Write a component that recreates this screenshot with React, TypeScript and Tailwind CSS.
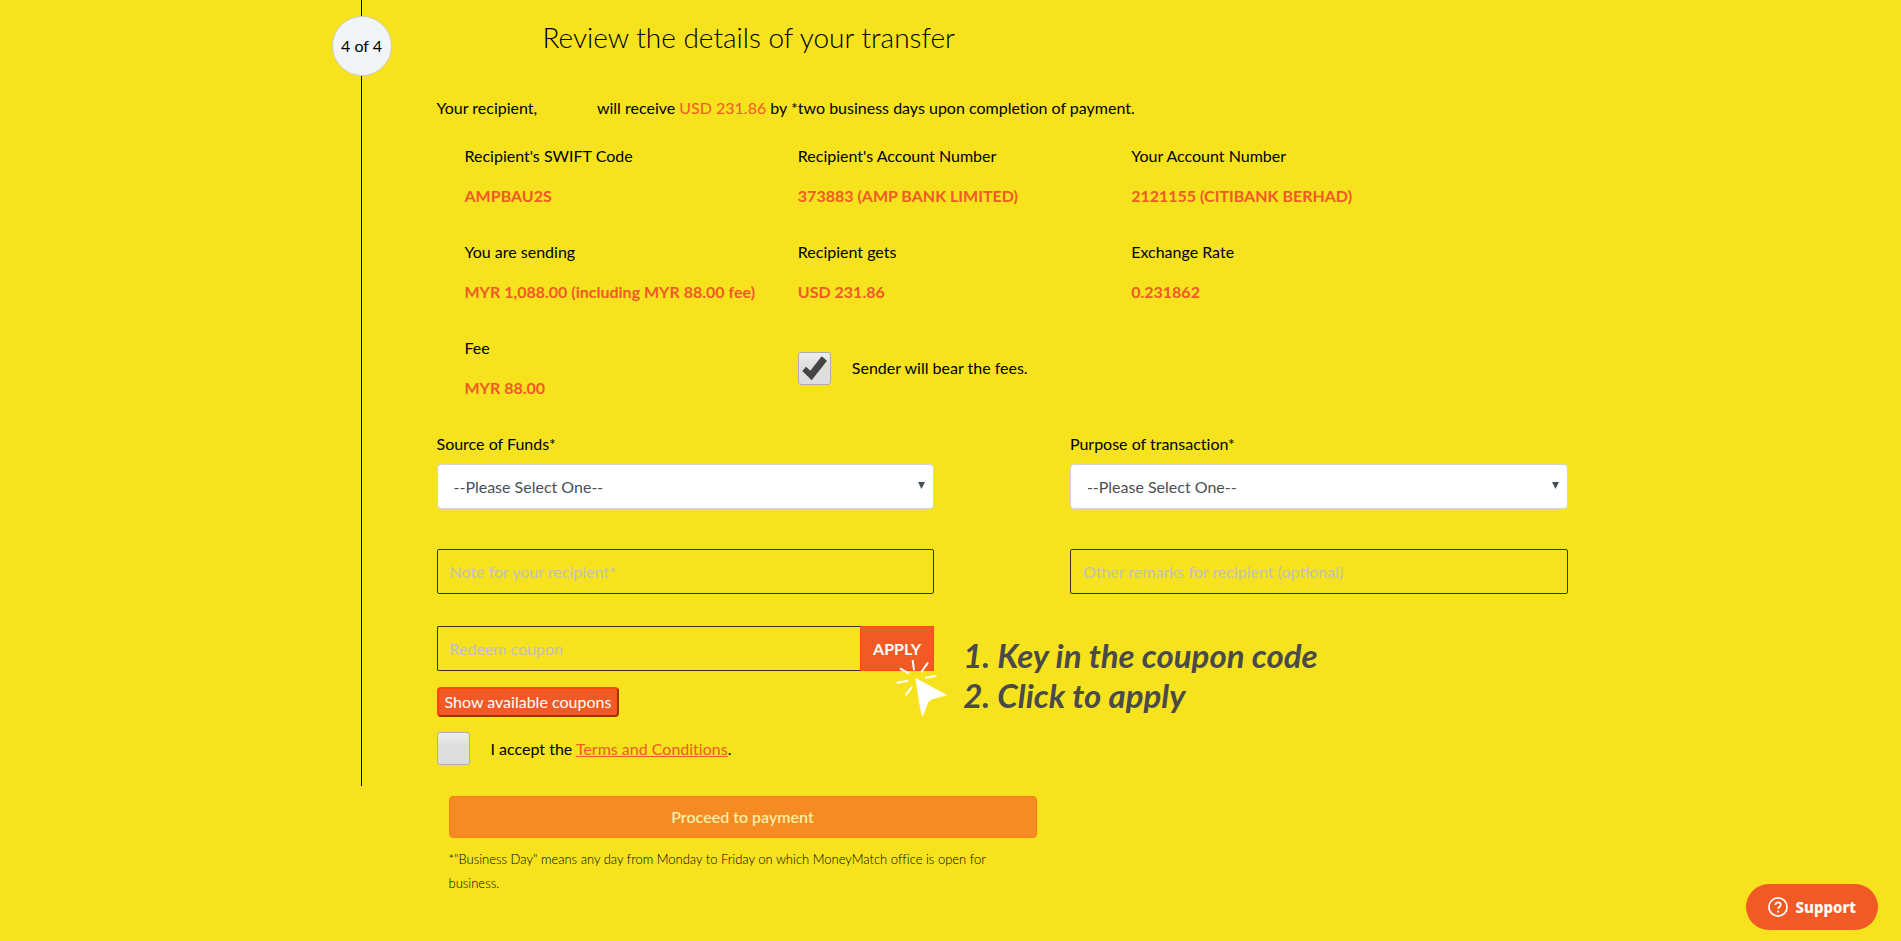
import { useState } from 'react';

type DetailProps = {
  label: string;
  value: string;
};

// One label / value pair in the summary grid
function Detail({ label, value }: DetailProps) {
  return (
    <div className="flex flex-col gap-4">
      <dt>{label}</dt>
      <dd className="font-bold text-[#f15a24]">{value}</dd>
    </div>
  );
}

type CheckBoxProps = {
  id: string;
  checked: boolean;
  onChange: (checked: boolean) => void;
};

function CheckBox({ id, checked, onChange }: CheckBoxProps) {
  return (
    <span className="grid size-[33px] shrink-0">
      <input
        id={id}
        type="checkbox"
        checked={checked}
        onChange={(e) => onChange(e.target.checked)}
        className="col-start-1 row-start-1 size-[33px] appearance-none rounded-[3px] border border-[#adadad] bg-linear-to-b from-[#eeeeee] via-[#dedede] via-40% to-[#dedede]"
      />
      {checked && (
        <svg viewBox="0 0 99 99" className="pointer-events-none col-start-1 row-start-1 size-[33px]">
          <path d="M13 57 24 44 37 56 71 13 87 26 41 85Z" fill="#444" />
        </svg>
      )}
    </span>
  );
}

type SelectFieldProps = {
  id: string;
  label: string;
};

function SelectField({ id, label }: SelectFieldProps) {
  return (
    <div className="flex w-[44%] flex-col gap-2">
      <label htmlFor={id}>{label}</label>
      <div className="grid items-center">
        <select
          id={id}
          className="col-start-1 row-start-1 h-[45px] w-full appearance-none rounded border border-[#ced4da] bg-white px-4 text-[#495057]"
        >
          <option>--Please Select One--</option>
        </select>
        <svg viewBox="0 0 7 7" className="pointer-events-none col-start-1 row-start-1 mr-[9px] mb-0.5 size-[7px] justify-self-end">
          <path d="M0 0H7L3.5 7Z" fill="#495057" />
        </svg>
      </div>
    </div>
  );
}

function ClickCursor() {
  return (
    <svg viewBox="50 148 156 171" className="pointer-events-none absolute top-[33px] right-[-14px] h-[57px] w-[52px]">
      <g stroke="#fff" strokeWidth="6" fill="none">
        <path d="M100 151 104 182" />
        <path d="M146 159 126 187" />
        <path d="M62 176 89 192" />
        <path d="M52 219 86 213" />
        <path d="M137 205 171 198" />
        <path d="M98 231 79 257" />
      </g>
      <path d="M108 204 204 257 158 269Q148 274 143 287L132 318H127L118 270Z" fill="#fff" />
    </svg>
  );
}

export default function App() {
  const [senderBears, setSenderBears] = useState(true);
  const [accepted, setAccepted] = useState(false);

  return (
    <div className="min-h-screen bg-[#f6e31e] font-['Lato','Liberation_Sans',sans-serif] text-base text-black [font-variant-ligatures:none]">
      <main className="mx-auto w-full max-w-[1238px]">
        <div className="flex gap-[45px]">
          {/* Step rail */}
          <div className="flex w-[60px] shrink-0 flex-col items-center">
            <div className="h-4 w-px bg-black" />
            <div className="flex size-[60px] items-center justify-center rounded-full border border-[#ccc] bg-[#f1f5f8]">
              4 of 4
            </div>
            <div className="w-px flex-1 bg-black" />
          </div>

          <section className="min-w-0 flex-1 pt-[19px] pr-0.5 pb-[21px]">
            <h1 className="ml-[106px] text-[28px] leading-9 font-light">Review the details of your transfer</h1>

            <p className="mt-[41px]">
              Your recipient,
              <span className="inline-block w-[56px]" /> will receive <span className="text-[#f15a24]">USD 231.86</span> by
              *two business days upon completion of payment.
            </p>

            <dl className="mt-6 grid grid-cols-3 gap-y-8 pr-[103px] pl-7">
              <Detail label="Recipient's SWIFT Code" value="AMPBAU2S" />
              <Detail label="Recipient's Account Number" value="373883 (AMP BANK LIMITED)" />
              <Detail label="Your Account Number" value="2121155 (CITIBANK BERHAD)" />
              <Detail label="You are sending" value="MYR 1,088.00 (including MYR 88.00 fee)" />
              <Detail label="Recipient gets" value="USD 231.86" />
              <Detail label="Exchange Rate" value="0.231862" />
              <Detail label="Fee" value="MYR 88.00" />
              <div className="flex items-center gap-[21px]">
                <CheckBox id="bear-fees" checked={senderBears} onChange={setSenderBears} />
                <label htmlFor="bear-fees">Sender will bear the fees.</label>
              </div>
            </dl>

            <div className="mt-8 flex justify-between">
              <SelectField id="source" label="Source of Funds*" />
              <SelectField id="purpose" label="Purpose of transaction*" />
            </div>

            <div className="mt-10 flex justify-between">
              <input
                type="text"
                aria-label="Note for your recipient"
                placeholder="Note for your recipient*"
                className="h-[45px] w-[44%] rounded-xs border border-[#333] px-3 [font-variant-ligatures:normal] placeholder:text-[#c0c0c0]"
              />
              <input
                type="text"
                aria-label="Other remarks for recipient"
                placeholder="Other remarks for recipient (optional)"
                className="h-[45px] w-[44%] rounded-xs border border-[#333] px-3 [font-variant-ligatures:normal] placeholder:text-[#c0c0c0]"
              />
            </div>

            <div className="mt-8 flex gap-[29px]">
              <div className="flex w-[44%] flex-col items-start">
                <div className="relative flex w-full">
                  <input
                    type="text"
                    aria-label="Redeem coupon"
                    placeholder="Redeem coupon"
                    className="h-[45px] min-w-0 flex-1 rounded-l-xs border border-r-0 border-[#333] px-3 placeholder:text-[#c0c0c0]"
                  />
                  <button type="button" className="h-[45px] w-[74px] border border-[#ff4a10] bg-[#f15a24] font-bold text-white">
                    APPLY
                  </button>
                  <ClickCursor />
                </div>
                <button
                  type="button"
                  className="mt-4 h-[30px] rounded border-2 border-t-[#ff4500] border-r-[#a82e00] border-b-[#a82e00] border-l-[#ff4500] bg-[#f15a24] px-1.5 text-white"
                >
                  Show available coupons
                </button>
                <div className="mt-[15px] flex items-center gap-[21px]">
                  <CheckBox id="terms" checked={accepted} onChange={setAccepted} />
                  <label htmlFor="terms">
                    I accept the{' '}
                    <a href="#terms" className="text-[#f15a24] underline">
                      Terms and Conditions
                    </a>
                    .
                  </label>
                </div>
              </div>
              <div className="mt-[9px] text-[33px] leading-10 font-bold text-[#4a4a4a] italic">
                <p>1. Key in the coupon code</p>
                <p>2. Click to apply</p>
              </div>
            </div>
          </section>
        </div>

        <div className="mt-2.5 ml-[117px] max-w-[588px]">
          <button
            type="button"
            className="h-[42px] w-full rounded border border-[#fb7f12] bg-[#f58b23] font-semibold text-[#fceea5]"
          >
            Proceed to payment
          </button>
          <p className="mt-[9px] pr-10 text-[13px] leading-6 font-light">
            *"Business Day" means any day from Monday to Friday on which MoneyMatch office is open for business.
          </p>
        </div>
      </main>

      {/* Support launcher */}
      <button
        type="button"
        className="fixed right-[23px] bottom-[11px] flex h-[46px] items-center gap-2 rounded-full bg-[#f15a24] px-[22px] font-['Noto_Sans',sans-serif] text-[15px] font-extrabold text-white"
      >
        <svg viewBox="0 0 20 20" className="size-5" fill="none" stroke="#fff">
          <circle cx="10" cy="10" r="9.1" strokeWidth="1.7" />
          <path d="M7.3 8C7.3 6.3 8.4 5.3 10 5.3S12.8 6.3 12.8 7.8C12.8 9.6 10.1 9.9 10.1 12" strokeWidth="1.7" />
          <circle cx="10.1" cy="14.6" r="1.1" fill="#fff" stroke="none" />
        </svg>
        Support
      </button>
    </div>
  );
}
